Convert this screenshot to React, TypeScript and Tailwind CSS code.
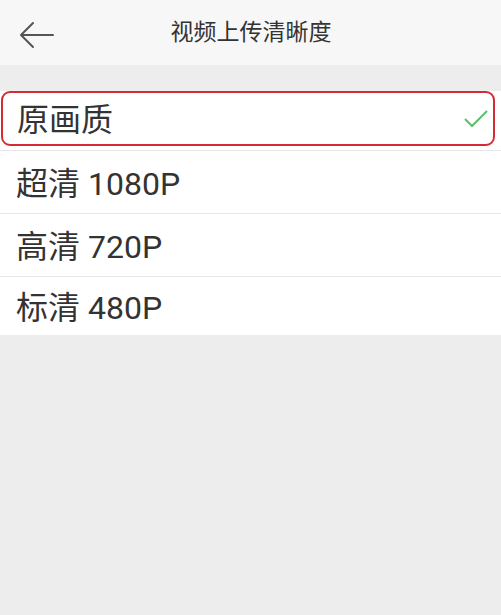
import React from 'react';

const options = ['超清 1080P', '高清 720P', '标清 480P'];

export default function App() {
  return (
    <div
      className="w-[501px] h-[615px] bg-[#ededed] text-[#333]"
      style={{ fontFamily: "Roboto, 'Noto Sans CJK SC', sans-serif" }}
    >
      <div className="relative h-[65px] bg-[#f7f7f7] flex items-center justify-center">
        <svg
          className="absolute left-[19px] top-[21px]"
          width="36"
          height="28"
          viewBox="0 0 36 28"
          fill="none"
          stroke="#555"
          strokeWidth="2"
          strokeLinecap="round"
          strokeLinejoin="round"
        >
          <path d="M34 14H3M14 2L2 14l12 12" />
        </svg>
        <span className="text-[23px] mt-[1px] pl-[1px]">视频上传清晰度</span>
      </div>
      <div className="h-[26px]" />
      <div className="bg-white">
        <div className="px-[1px] pt-0 pb-[4px]">
          <div className="h-[55px] w-[494px] border-2 border-[#d42b35] rounded-[9px] flex items-center justify-between pl-[14px] pr-[5px]">
            <span className="text-[32px] mt-[2px]">原画质</span>
            <svg width="24" height="18" viewBox="0 0 24 18" fill="none" stroke="#5cbf6a" strokeWidth="2">
              <path d="M1 9l7 7L23 1" />
            </svg>
          </div>
        </div>
        {options.map((o, i) => (
          <div
            key={o}
            className={`flex items-center pl-[16px] border-t border-[#e6e6e6] ${i === 2 ? 'h-[59px]' : 'h-[63px]'}`}
          >
            <span className="text-[32px] mt-[3px]">{o}</span>
          </div>
        ))}
      </div>
    </div>
  );
}
